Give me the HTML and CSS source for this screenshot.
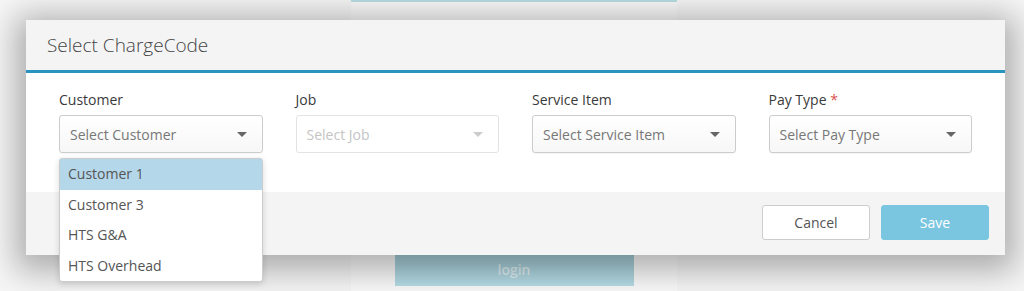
FILE: index.html
```html
<!DOCTYPE html>
<html lang="en">
<head>
    <meta charset="UTF-8">
    <title>Select ChargeCode</title>
    <meta name="viewport" content="width=device-width, initial-scale=1.0">
    <link rel="stylesheet" href="styles.css">
</head>
<body>
<div class="page">
    <div class="login-card">
        <button class="login-button">login</button>
    </div>
</div>

<div class="modal">
    <div class="modal-header">
        <h2>Select ChargeCode</h2>
    </div>
    <div class="modal-body">
        <div class="field">
            <label>Customer</label>
            <div class="picker">
                <span>Select Customer</span>
                <i class="caret"></i>
            </div>
            <ul class="picker-menu">
                <li class="active">Customer 1</li>
                <li>Customer 3</li>
                <li>HTS G&amp;A</li>
                <li>HTS Overhead</li>
            </ul>
        </div>
        <div class="field">
            <label>Job</label>
            <div class="picker disabled">
                <span>Select Job</span>
                <i class="caret"></i>
            </div>
        </div>
        <div class="field">
            <label>Service Item</label>
            <div class="picker">
                <span>Select Service Item</span>
                <i class="caret"></i>
            </div>
        </div>
        <div class="field">
            <label>Pay Type <em class="required">*</em></label>
            <div class="picker">
                <span>Select Pay Type</span>
                <i class="caret"></i>
            </div>
        </div>
    </div>
    <div class="modal-footer">
        <button class="button secondary">Cancel</button>
        <button class="button primary">Save</button>
    </div>
</div>
</body>
</html>
```

FILE: styles.css
```css
body, html {
    font-family: 'Open Sans', 'Liberation Sans', sans-serif;
    background-color: #f6f6f6;
    margin: 0;
    padding: 0;
    height: 100%;
    color: #333;
    overflow: hidden;
}
.page {
    display: flex;
    justify-content: center;
    height: 100%;
    padding-left: 6px;
}
.login-card {
    width: 326px;
    background-color: #fafafa;
    border-top: 2px solid #b8dde4;
    display: flex;
    flex-direction: column;
    justify-content: flex-end;
    align-items: center;
    padding-bottom: 5px;
    box-sizing: border-box;
    margin-left: -2px;
}
.login-button {
    width: 239px;
    height: 31px;
    border: none;
    background: linear-gradient(#a3cbd6, #b6dde6);
    color: rgba(255, 255, 255, 0.6);
    font-family: inherit;
    font-size: 14px;
    font-weight: 600;
    padding-bottom: 4px;
}
.modal {
    position: absolute;
    left: 26px;
    top: 20px;
    width: 979px;
    background-color: #fff;
    box-shadow: 0 6px 30px 10px rgba(0, 0, 0, 0.3);
}
.modal-header {
    height: 50px;
    background-color: #f4f4f4;
    border-bottom: 3px solid #2a94bf;
    display: flex;
    align-items: center;
    padding: 0 21px;
}
.modal-header h2 {
    margin: 0;
    font-size: 19px;
    font-weight: 300;
    color: #444;
}
.modal-body {
    display: grid;
    grid-template-columns: repeat(4, 1fr);
    column-gap: 33px;
    padding: 17px 33px 39px;
}
.field {
    position: relative;
}
.field label {
    display: block;
    font-size: 14px;
    line-height: 20px;
    margin-bottom: 5px;
    color: #3a3a3a;
}
.required {
    font-style: normal;
    color: #d9534f;
}
.picker {
    height: 38px;
    box-sizing: border-box;
    border: 1px solid #ccc;
    border-radius: 3px;
    background: linear-gradient(#fff, #f7f7f7);
    box-shadow: 0 1px 1px rgba(0, 0, 0, 0.04);
    display: flex;
    align-items: center;
    justify-content: space-between;
    padding: 0 15px 0 10px;
    font-size: 14px;
    color: #777;
}
.caret {
    width: 0;
    height: 0;
    border-left: 5px solid transparent;
    border-right: 5px solid transparent;
    border-top: 5px solid #666;
}
.picker.disabled {
    border-color: #e3e3e3;
    background: #fff;
    color: #c4c4c4;
    box-shadow: none;
}
.picker.disabled .caret {
    border-top-color: #ccc;
}
.picker-menu {
    position: absolute;
    left: 0;
    right: 0;
    top: 68px;
    margin: 0;
    padding: 0;
    list-style: none;
    background-color: #fff;
    border: 1px solid #ccc;
    border-radius: 3px;
    box-shadow: 0 2px 6px rgba(0, 0, 0, 0.15);
    z-index: 2;
}
.picker-menu li {
    height: 30.5px;
    line-height: 30px;
    padding-left: 8px;
    font-size: 14px;
    color: #555;
}
.picker-menu li.active {
    background-color: #b5d7ea;
}
.modal-footer {
    height: 63px;
    background-color: #f4f4f4;
    display: flex;
    justify-content: flex-end;
    align-items: center;
    gap: 11px;
    padding: 0 16px 2px;
    box-sizing: border-box;
}
.button {
    width: 108px;
    height: 35px;
    border-radius: 3px;
    font-family: inherit;
    font-size: 14px;
}
.button.secondary {
    background-color: #fff;
    border: 1px solid #ccc;
    color: #555;
}
.button.primary {
    background-color: #7ac5df;
    border: 1px solid #7ac5df;
    color: #fff;
}
```
